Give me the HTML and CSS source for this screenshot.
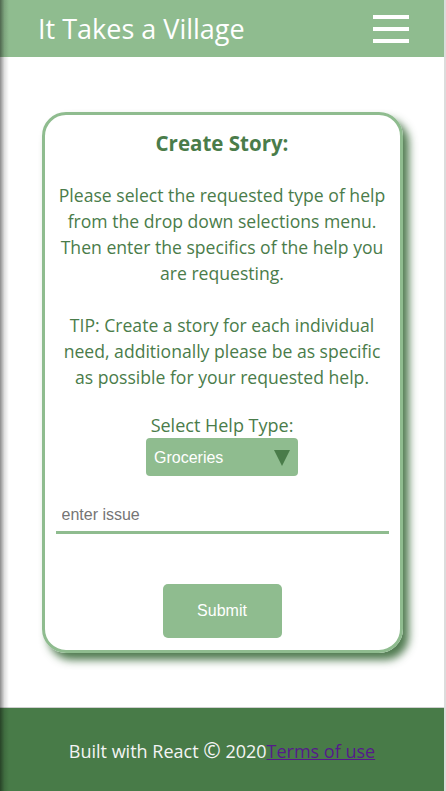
FILE: index.html
```html
<!DOCTYPE html>
<html lang="en">
<head>
<meta charset="utf-8">
<title>It Takes a Village</title>
<link rel="stylesheet" href="styles.css">
</head>
<body>
<div class="page">
  <header class="topbar">
    <h1 class="brand">It Takes a Village</h1>
    <button class="burger" aria-label="menu">
      <span class="bar"></span><span class="bar"></span><span class="bar"></span>
    </button>
  </header>
  <main class="main">
    <section class="card">
      <h2 class="card-title">Create Story:</h2>
      <p class="intro">Please select the requested type of help from the drop down selections menu. Then enter the specifics of the help you are requesting.</p>
      <p class="intro tip">TIP: Create a story for each individual need, additionally please be as specific as possible for your requested help.</p>
      <form class="story-form">
        <label class="select-label" for="helpType">Select Help Type:</label>
        <span class="select-wrap">
          <select id="helpType" class="select">
            <option>Groceries</option>
          </select>
        </span>
        <input class="issue" type="text" placeholder="enter issue">
        <button class="submit" type="button">Submit</button>
      </form>
    </section>
  </main>
  <footer class="footer">
    <span class="footer-text">Built with React <span class="copy">©</span> 2020</span><a class="terms" href="#terms">Terms of use</a>
  </footer>
</div>
</body>
</html>
```
FILE: styles.css
```css
html {
  background: #dcdcdc;
}
body {
  margin: 0;
  font-family: "Open Sans", "Noto Sans", sans-serif;
}
.page {
  width: 444px;
  min-height: 791px;
  background: #fff;
  display: flex;
  flex-direction: column;
  position: relative;
}
.page::before {
  content: "";
  position: absolute;
  left: 0;
  top: 0;
  bottom: 0;
  width: 9px;
  background: linear-gradient(to right, rgba(0,0,0,0.45), rgba(0,0,0,0.12) 50%, rgba(0,0,0,0));
  pointer-events: none;
  z-index: 5;
}
.topbar {
  height: 57px;
  background: #8fbc8f;
  display: flex;
  align-items: center;
  justify-content: space-between;
  padding: 0 35px 0 38px;
}
.brand {
  margin: 0;
  color: #fff;
  font-weight: 400;
  font-size: 27px;
  line-height: 1;
  padding-bottom: 1px;
}
.burger {
  background: none;
  border: 0;
  padding: 0;
  width: 36px;
  display: flex;
  flex-direction: column;
  gap: 8px;
  margin-top: 1px;
}
.bar {
  display: block;
  height: 4px;
  background: #fff;
}
.main {
  flex: 1;
  padding: 55px 0 54px;
  display: flex;
  justify-content: center;
}
.card {
  width: 361px;
  box-sizing: border-box;
  border: 3px solid #8fbc8f;
  border-radius: 24px;
  padding: 14px 11px 12px;
  box-shadow: 6px 7px 8px rgba(50, 100, 50, 0.85);
  color: #4a7c4a;
  text-align: center;
}
.card-title {
  margin: 0;
  font-size: 20.5px;
  line-height: 28px;
  font-weight: 700;
}
.intro {
  margin: 25px 0 0;
  font-size: 17.6px;
  line-height: 26px;
}
.intro.tip {
  margin-top: 26px;
}
.story-form {
  display: flex;
  flex-direction: column;
  align-items: center;
  margin-top: 23px;
}
.select-label {
  font-size: 18px;
  line-height: 25px;
}
.select-wrap {
  position: relative;
  display: block;
}
.select {
  -webkit-appearance: none;
  appearance: none;
  width: 152px;
  height: 38px;
  border: 0;
  border-radius: 4px;
  background: #8fbc8f;
  color: #fff;
  font-family: "Liberation Sans", Arial, sans-serif;
  font-size: 16px;
  padding: 0 8px;
}
.select-wrap::after {
  content: "";
  position: absolute;
  right: 8px;
  top: 12px;
  border-left: 8px solid transparent;
  border-right: 8px solid transparent;
  border-top: 16px solid #4a7c4a;
  pointer-events: none;
}
.issue {
  margin-top: 14px;
  width: 333px;
  height: 44px;
  box-sizing: border-box;
  border: 0;
  border-bottom: 3px solid #8fbc8f;
  padding: 8px 6px 0;
  font-family: "Liberation Sans", Arial, sans-serif;
  font-size: 16px;
  color: #333;
  outline: none;
}
.issue::placeholder {
  color: #757575;
}
.submit {
  margin-top: 50px;
  width: 119px;
  height: 54px;
  border: 0;
  border-radius: 5px;
  background: #8fbc8f;
  color: #fff;
  font-family: "Liberation Sans", Arial, sans-serif;
  font-size: 16px;
}
.footer {
  height: 84px;
  box-sizing: border-box;
  border-top: 1px solid #cfcfcf;
  background: #487b48;
  display: flex;
  align-items: center;
  justify-content: center;
  font-size: 18px;
  color: #f4f4f4;
  padding-top: 2px;
}
.copy {
  font-size: 21px;
  line-height: 1;
}
.terms {
  color: #551a8b;
  text-decoration: underline;
}
```
